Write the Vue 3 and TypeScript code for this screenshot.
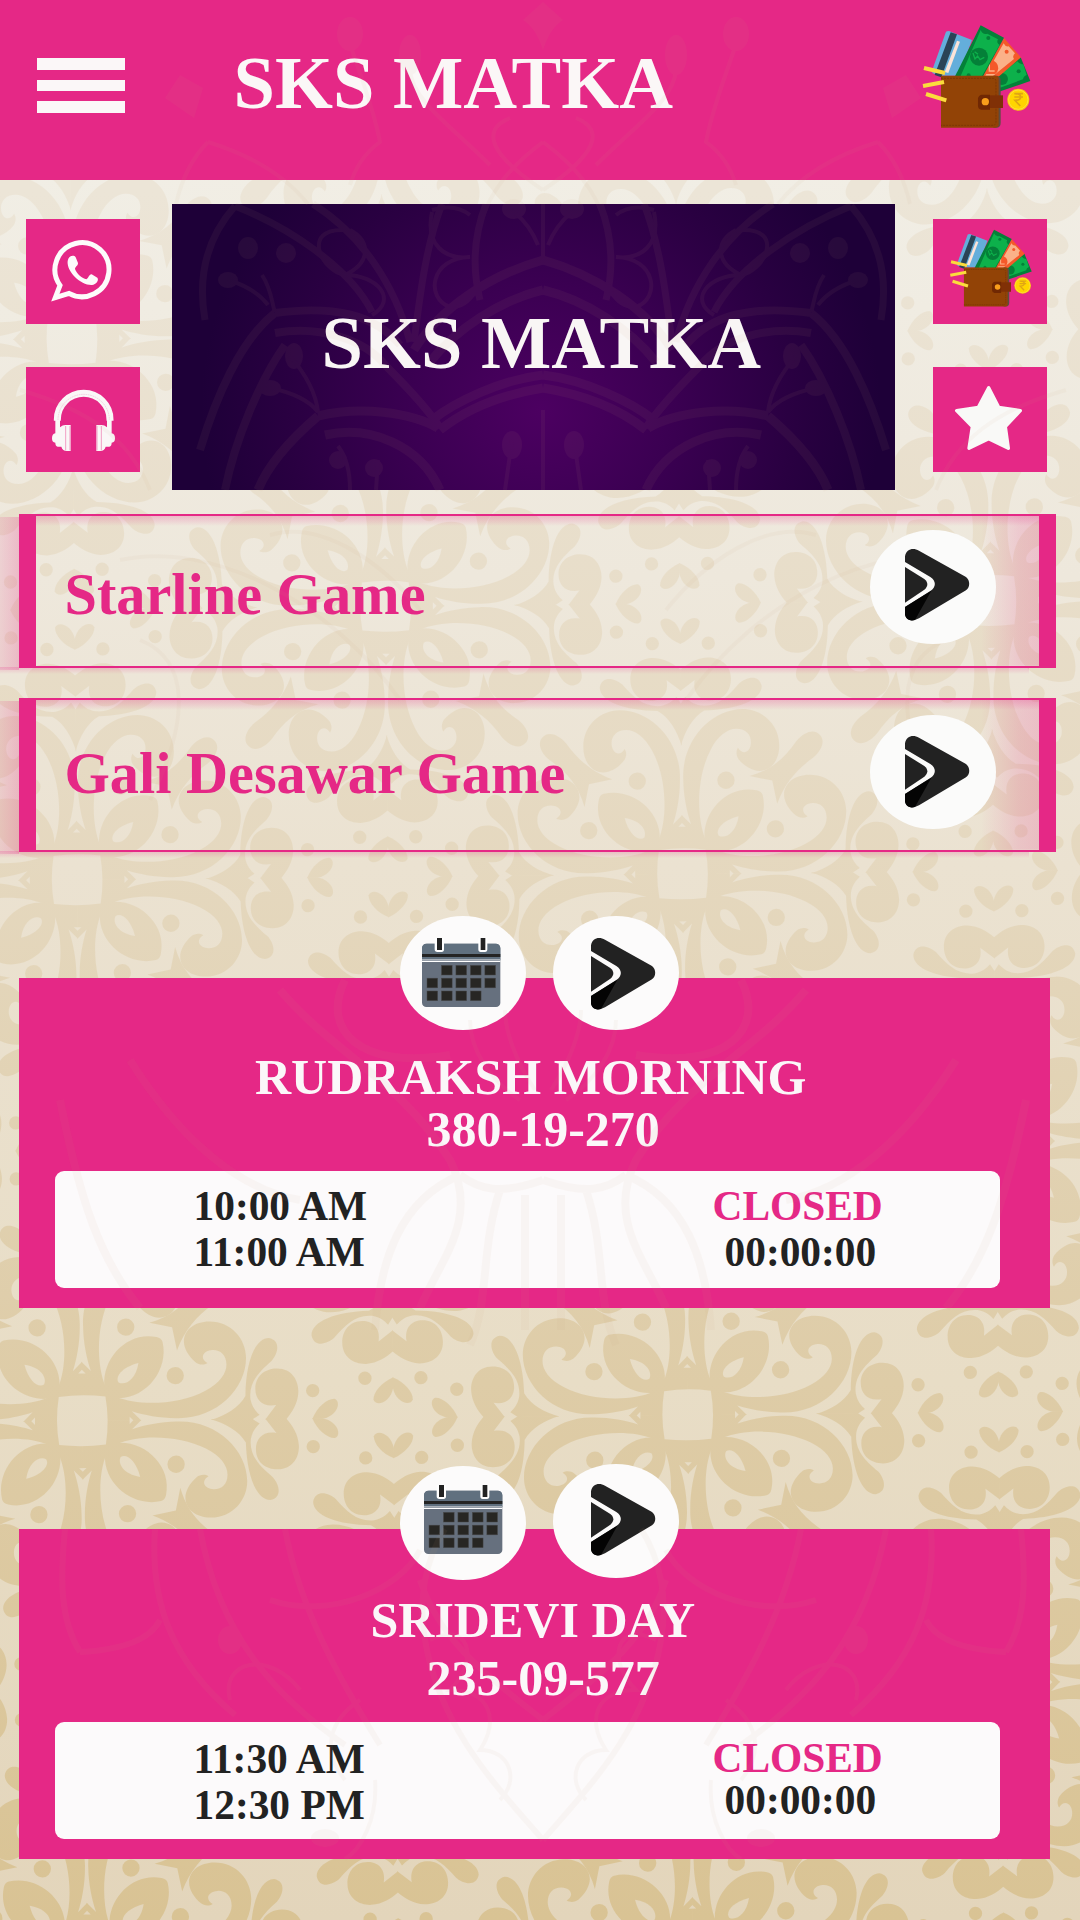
<script setup lang="ts">
interface Point { x: number; y: number }
interface GameRow { label: string; kind: string; iconShift: number }
interface Market {
  name: string
  result: string
  open: string
  close: string
  status: string
  timer: string
  kind: string
  calX: number
  calY: number
  playY: number
}

const games: GameRow[] = [
  { label: 'Starline Game', kind: 'starline', iconShift: -9 },
  { label: 'Gali Desawar Game', kind: 'gali', iconShift: -3 },
]

const markets: Market[] = [
  { name: 'RUDRAKSH MORNING', result: '380-19-270', open: '10:00 AM', close: '11:00 AM', status: 'CLOSED', timer: '00:00:00', kind: 'first', calX: 0, calY: 0, playY: 0 },
  { name: 'SRIDEVI DAY', result: '235-09-577', open: '11:30 AM', close: '12:30 PM', status: 'CLOSED', timer: '00:00:00', kind: 'second', calX: 6, calY: -9, playY: -6 },
]

// Damask lattice: two interleaved grids of the same eight-fold flower.
const flowers: Point[] = []
for (let r = -4; r <= 2; r++) {
  for (let c = -2; c <= 2; c++) {
    flowers.push({ x: c * 605.4, y: r * 541 })
    flowers.push({ x: c * 605.4 + 311, y: r * 541 + 270.5 })
  }
}
const arms = [0, 90, 180, 270]
const calCells: Point[] = []
;[[1, 2, 3, 4], [0, 1, 2, 3, 4], [0, 1, 2, 3]].forEach((cols, row) => {
  cols.forEach((c) => calCells.push({ x: 81 + c * 43.4, y: 148 + row * 38.5 }))
})
</script>

<template>
  <div class="page">
    <svg class="wallpaper" viewBox="0 0 1080 1920" aria-hidden="true">
      <defs>
        <linearGradient id="ink" x1="0" y1="0" x2="0" y2="1">
          <stop offset="0.1" stop-color="#ece5d7" />
          <stop offset="0.4" stop-color="#e6dac3" />
          <stop offset="0.72" stop-color="#decca7" />
          <stop offset="1" stop-color="#d9c394" />
        </linearGradient>
        <g id="half">
          <path d="M102-71C170-42 290-45 370-87C415-110 434-140 434-165C434-195 415-210 392-209C365-208 352-185 377-170C365-162 350-166 342-172C320-190 307-215 307-234C307-270 340-294 383-294C450-294 493-240 493-185C493-90 400 0 282-5C235-5 185-15 149-27L177 1L0 1L0 0Z" />
          <circle cx="280" cy="-133" r="26" />
          <path d="M385 1C430-12 470-35 490-70C492-170 520-243 562-243C600-235 588-195 570-175C530-140 500-110 505-60C510-35 520-25 532-13L510 1Z" />
          <path d="M549 1L582-42C540-35 520-60 520-90C520-130 550-151 585-151C630-151 650-115 649-80C647-45 630-20 612 1Z" />
          <path d="M690 1C705-35 735-60 757-59C778-52 768-8 720 1Z" />
          <circle cx="692" cy="-84" r="20" />
        </g>
        <g id="arm">
          <use href="#half" />
          <use href="#half" transform="scale(1 -1)" />
          <path d="M67-105C62-190 140-268 225-249Q240-246 243-234C262-150 190-62 105-67L0 0Z" />
          <path d="M204-292L272-278L286-208C310-270 345-310 395-345C425-370 432-400 415-415C400-432 370-425 345-395C310-345 270-310 204-292Z" />
          <path fill="#000" d="M170-172C120-160 98-130 110-114C130-104 162-122 170-172Z" />
          <path fill="#000" d="M142-11L153 0L142 11Z" />
        </g>
        <g id="flower">
          <use v-for="a in arms" :key="a" href="#arm" :transform="`rotate(${a})`" />
          <path fill="#000" d="M-70-72Q0-82 70-72Q82 0 70 72Q0 80-70 72Q-82 0-70-72Z" />
        </g>
        <mask id="damask" maskUnits="userSpaceOnUse" x="0" y="0" width="1080" height="1920">
          <g fill="#fff" transform="translate(687.7 1415) rotate(-.55)">
            <use
              v-for="(f, i) in flowers"
              :key="i"
              href="#flower"
              :transform="`translate(${f.x} ${f.y}) scale(.3333)`"
            />
          </g>
        </mask>
        <g id="wallet">
          <path fill="#64aedb" d="M138 66Q146 62 154 67L216 91L176 198H118L97 190Q96 180 100 172Z" />
          <path fill="#2a4356" d="M152 68L171 74L124 203L104 196Z" />
          <path fill="#fbe3d8" d="M171 93L180 96L145 190L134 187Z" />
          <path fill="#048038" d="M362 143L391 214L286 250L290 190Z" />
          <path fill="#0db14b" d="M352 155Q360 166 370 163L380 196Q370 200 369 209L300 234L296 196Z" />
          <circle cx="356" cy="185" r="6" fill="#048038" />
          <circle cx="306" cy="208" r="18" fill="#048038" />
          <path fill="#f4592a" d="M312 85L363 143L280 215H240Z" />
          <path fill="#fbb188" d="M311 101Q316 112 326 110L345 131Q336 140 342 148L280 198H256Z" />
          <circle cx="320" cy="126" r="6" fill="#f4592a" />
          <path fill="#f4592a" d="M258 193A23 23 0 1 1 286 193Z" />
          <path d="M268 164V184H284" fill="none" stroke="#fbb188" stroke-width="4" />
          <path fill="#048038" d="M242 47L312 84L248 202H164Z" />
          <path fill="#0db14b" d="M242 61Q248 76 262 72L294 89Q288 100 299 106L246 199H182Z" />
          <circle cx="265" cy="85" r="6" fill="#048038" />
          <circle cx="206" cy="197" r="6" fill="#048038" />
          <circle cx="237" cy="141" r="27" fill="#048038" />
          <path d="M219 130L225 148L233 139L240 150L253 143M224 126L234 134" fill="none" stroke="#0db14b" stroke-width="4" />
          <path fill="#5c4c43" d="M280 198H289Q302 198 302 212V339Q302 354 289 354H280Z" />
          <path fill="#924306" d="M123 198H286Q296 198 296 208V344Q296 354 286 354H123Z" />
          <path d="M123 206H278Q288 206 288 216V337Q288 347 278 347H123" fill="none" stroke="#713006" stroke-width="2" stroke-dasharray="6 3" />
          <path fill="#803006" d="M240 257H309V295H240Z" />
          <path fill="#702803" d="M244 255H270V300H244Q234 298 234 288V265Q236 257 244 255Z" />
          <circle cx="256" cy="276" r="11" fill="#f89e1b" />
          <circle cx="355" cy="270" r="33" fill="#fbc60e" />
          <circle cx="355" cy="270" r="29" fill="#ffd500" stroke="#fde45b" stroke-width="2" />
          <path d="M343 252H369M343 262H369M345 252Q362 252 362 262T345 272L361 289" fill="none" stroke="#e0a514" stroke-width="5" />
          <g stroke="#fbdc3c" stroke-width="12">
            <path d="M72 175L135 190" />
            <path d="M69 229L132 217" />
            <path d="M78 253L139 272" />
          </g>
        </g>
        <g id="play">
          <path fill="#222" d="M114 105V88C118 66 138 61 156 71L297 150C310 160 310 181 297 190L156 274C138 284 118 283 114 262V240L190 192C208 180 208 162 190 150Z" />
          <path fill="#222" d="M114 120L172 156C184 166 184 178 172 188L114 227Z" />
          <path fill="#040404" d="M114 240L193 191L144 279C130 283 116 279 114 262Z" />
        </g>
      </defs>
      <rect width="1080" height="1920" fill="url(#ink)" mask="url(#damask)" />
    </svg>

    <header class="topbar">
      <div class="menu"><i /><i /><i /></div>
      <h1 class="title">SKS MATKA</h1>
      <svg class="wallet" viewBox="60 40 340 320"><use href="#wallet" /></svg>
    </header>

    <section class="hero">
      <div class="side">
        <div class="tile">
          <svg viewBox="18 27 342 315">
            <path d="M120 226A81 81 0 1 1 147 250L106 263Z" fill="none" stroke="#fdfbfb" stroke-width="15" />
            <path fill="#fdfbfb" d="M145 146C149 137 162 134 167 142L174 159C175 166 165 171 165 177C170 192 187 205 199 208C205 206 207 192 215 193L232 203C238 211 228 223 216 225C184 227 139 186 143 153Z" />
          </svg>
        </div>
        <div class="tile">
          <svg viewBox="18 471 342 315">
            <path d="M112 632V629A79 79 0 0 1 270 629V632" fill="none" stroke="#faf7f7" stroke-width="21" />
            <path d="M114 630A77 77 0 0 1 268 630" fill="none" stroke="#f0bfd4" stroke-width="2" stroke-dasharray="5 2" />
            <g fill="#faf7f7">
              <path d="M106 630H120V652Q128 645 136 645H152V723H140Q128 723 124 710H113Q106 708 106 698Q96 698 96 685T106 670Z" />
              <path d="M275 630H261V652Q253 645 245 645H229V723H241Q253 723 257 710H268Q275 708 275 698Q285 698 285 685T275 670Z" />
            </g>
            <path d="M137 648V721M150 648V721M231 648V721M244 648V721" stroke="#ee8dbb" stroke-width="2.5" />
          </svg>
        </div>
      </div>
      <div class="banner"><span>SKS MATKA</span></div>
      <div class="side">
        <div class="tile tile-wallet">
          <svg class="wallet-sm" viewBox="60 40 340 320" preserveAspectRatio="none"><use href="#wallet" /></svg>
        </div>
        <div class="tile">
          <svg viewBox="39 471 342 315">
            <path d="M206 533L236 592L301 602L256 650L265 715L206 686L147 715L157 650L110 602L175 592Z" fill="#f9f9f7" stroke="#f9f9f7" stroke-width="10" stroke-linejoin="round" />
          </svg>
        </div>
      </div>
    </section>

    <section v-for="g in games" :key="g.kind" class="game" :class="g.kind">
      <span class="game-label">{{ g.label }}</span>
      <svg class="disc" viewBox="0 0 378 342">
        <ellipse cx="189" cy="171" rx="189" ry="171" fill="#fbfbfa" />
        <use href="#play" :transform="`translate(-9 ${g.iconShift})`" />
      </svg>
    </section>

    <section v-for="m in markets" :key="m.kind" class="market" :class="m.kind">
      <div class="discs">
        <svg class="disc" viewBox="0 0 378 342">
          <ellipse cx="189" cy="171" rx="189" ry="171" fill="#fcfbfb" />
          <g :transform="`translate(${m.calX} ${m.calY})`">
            <rect x="66" y="83" width="235" height="190" rx="13" fill="#66707e" />
            <path d="M66 98Q66 83 81 83H286Q301 83 301 98V133H66Z" fill="#60707f" />
            <rect x="66" y="114" width="235" height="9" fill="#242424" />
            <rect x="66" y="129" width="235" height="3" fill="#a9b0b8" />
            <rect x="66" y="134" width="235" height="4" fill="#fff" />
            <path d="M104 66V100Q104 108 112 108H125Q132 108 132 100V66ZM235 66V100Q235 108 242 108H255Q262 108 262 100V66Z" fill="#fff" />
            <path d="M111 66H126V102H111ZM242 66H256V102H242Z" fill="#222" />
            <rect v-for="(c, i) in calCells" :key="i" :x="c.x" :y="c.y" width="32" height="29" fill="#272623" stroke="#48484a" stroke-width="1.5" />
          </g>
        </svg>
        <svg class="disc disc-play" viewBox="0 0 378 342">
          <ellipse cx="189" cy="171" rx="189" ry="171" fill="#fcfbfb" />
          <use href="#play" :transform="`translate(0 ${m.playY})`" />
        </svg>
      </div>
      <h2 class="market-name">{{ m.name }}</h2>
      <p class="market-result">{{ m.result }}</p>
      <div class="times">
        <div class="col hours"><span>{{ m.open }}</span><span>{{ m.close }}</span></div>
        <div class="col state"><span class="closed">{{ m.status }}</span><span class="timer">{{ m.timer }}</span></div>
      </div>
    </section>

    <svg class="mandala" viewBox="0 0 1080 1920" aria-hidden="true">
      <defs>
        <g id="mandala-half">
          <g fill="#c9a07c" stroke="none">
            <path d="M543 2L523 20Q536 28 543 50Z" />
            <ellipse cx="350" cy="34" rx="13" ry="17" />
            <ellipse cx="410" cy="55" rx="11" ry="20" />
            <path d="M180 75L165 98L194 118L203 88Z" />
            <ellipse cx="248" cy="248" rx="10" ry="11" />
            <ellipse cx="286" cy="253" rx="10" ry="10" />
            <ellipse cx="228" cy="280" rx="10" ry="8" />
            <ellipse cx="270" cy="388" rx="11" ry="8" />
            <ellipse cx="294" cy="356" rx="9" ry="13" />
            <ellipse cx="514" cy="209" rx="12" ry="10" />
            <ellipse cx="512" cy="445" rx="10" ry="14" />
            <ellipse cx="338" cy="460" rx="9" ry="9" />
            <ellipse cx="374" cy="468" rx="9" ry="9" />
            <ellipse cx="230" cy="1640" rx="12" ry="14" />
            <ellipse cx="325" cy="1838" rx="14" ry="9" />
          </g>
          <path d="M352 50C362 80 374 110 380 142Q358 158 350 185M410 70C412 100 450 125 490 165" />
          <path d="M208 142C250 155 285 175 308 204M208 142Q185 165 176 204M543 142C512 165 490 190 480 225M510 118C480 130 490 155 543 190" />
          <path d="M235 206C290 228 350 268 372 312M235 206C205 240 198 280 205 320M313 204C362 235 395 285 410 342M442 204C426 245 420 295 414 342M486 204C474 235 472 268 480 300" stroke-width="7" />
          <path d="M543 260C490 275 440 308 414 350M543 290C500 300 455 330 430 362" stroke-width="9" />
          <path d="M275 313C335 305 375 315 400 345M275 313C240 340 215 400 200 450M275 333C320 325 365 340 385 365C415 395 430 412 440 428M285 345C260 380 235 440 225 490" stroke-width="8" />
          <path d="M318 416C360 406 410 412 438 428M318 416C290 440 268 465 258 490M325 435C370 425 420 445 440 490M543 388C500 395 465 410 440 430M543 375C500 380 455 402 432 420" stroke-width="9" />
          <path d="M432 210Q455 203 470 215M432 212C425 245 445 260 470 257C430 258 425 298 450 307Q465 308 475 292M350 230C370 240 372 262 345 275M345 230C300 228 322 272 345 275C378 275 398 300 372 315" />
          <path d="M350 490C350 470 345 455 338 446M376 490L378 460M505 490L512 440M543 410V490M543 204V262M514 212Q530 225 538 245M262 275C272 290 272 305 275 312M228 280Q255 288 268 305M290 356Q315 385 318 412M270 388Q305 395 318 412" />
          <path d="M20 390C90 410 130 440 150 490M120 560C210 540 330 600 400 700M270 535C320 520 380 560 420 610M140 640C190 660 190 720 150 800" />
          <path d="M345 980C320 1030 360 1070 450 1055M280 990C330 1050 400 1080 450 1160C480 1220 440 1260 420 1308M60 1100C80 1200 100 1260 140 1308M130 1060C180 1140 240 1190 300 1200M543 1180C500 1195 480 1190 460 1175M460 1175C400 1200 380 1260 375 1330M500 1190C480 1250 490 1300 470 1345M525 1195V1330" stroke-width="8" />
          <path d="M520 1100C490 1080 470 1050 470 1020M535 1090C515 1060 505 1030 505 1010" />
          <path d="M543 1840C500 1790 440 1730 425 1640C418 1600 425 1560 445 1529M543 1720C480 1670 440 1640 420 1580M345 1745C280 1700 220 1640 200 1529M380 1745C340 1680 300 1610 285 1529M235 1715C170 1660 150 1600 155 1529M270 1600C330 1620 400 1590 420 1550M80 1652C120 1650 150 1640 160 1620M80 1652C60 1620 60 1580 65 1529" stroke-width="6" />
          <path d="M430 1640C470 1620 480 1660 450 1690C490 1690 500 1720 480 1750C510 1750 520 1780 500 1800M230 1700C220 1660 270 1650 300 1690M345 1780C320 1750 330 1720 360 1700M375 1780C378 1820 360 1850 345 1859" />
        </g>
      </defs>
      <g fill="none" stroke="#c9a07c" stroke-width="4" opacity=".06">
        <use href="#mandala-half" />
        <use href="#mandala-half" transform="translate(1086 0) scale(-1 1)" />
      </g>
    </svg>
  </div>
</template>

<style>
body {
  margin: 0;
}
</style>

<style scoped>
.page {
  position: relative;
  width: 1080px;
  height: 1920px;
  overflow: hidden;
  display: flex;
  flex-direction: column;
  font-family: "Liberation Serif", "Times New Roman", serif;
  font-weight: 700;
  background: linear-gradient(#f1eee5 9%, #eee8dc 30%, #ebe2d1 45%, #e8ddc6 72%, #e3d5bb 100%);
}
.wallpaper,
.mandala {
  position: absolute;
  top: 0;
  left: 0;
  width: 1080px;
  height: 1920px;
  pointer-events: none;
}
.page > header,
.page > section {
  position: relative;
}
.topbar {
  flex: none;
  height: 180px;
  display: flex;
  align-items: flex-start;
  background: #e52886;
}
.menu {
  display: flex;
  flex-direction: column;
  gap: 10px;
  width: 88px;
  margin: 58px 0 0 37px;
}
.menu i {
  display: block;
  height: 11.5px;
  background: #fbf7f8;
}
.title {
  margin: 42.5px 0 0 108.5px;
  width: 686.5px;
  font-size: 74.5px;
  line-height: 80px;
  color: #fbf7f7;
  font-weight: 700;
}
.wallet {
  width: 113.3px;
  height: 106.7px;
  margin-top: 23.3px;
}
.hero {
  flex: none;
  display: flex;
  height: 286px;
  margin-top: 24px;
  padding-left: 26px;
}
.side {
  display: flex;
  flex-direction: column;
  gap: 43px;
  padding-top: 15px;
}
.tile {
  width: 114px;
  height: 105px;
  background: #e52886;
}
.tile svg {
  display: block;
  width: 100%;
  height: 100%;
}
.tile-wallet {
  box-sizing: border-box;
  padding: 8.5px 0 0 15px;
}
.tile svg.wallet-sm {
  width: 86px;
  height: 80px;
}
.banner {
  width: 723px;
  margin: 0 38px 0 32px;
  background: radial-gradient(ellipse 340px 330px at 51% 72%, #4c0061 0%, #3b0052 38%, #290041 75%, #1e0038 100%);
}
.banner span {
  display: block;
  margin: 99px 0 0 149.5px;
  font-size: 74.5px;
  line-height: 80px;
  color: #f9f6f5;
}
.game {
  flex: none;
  box-sizing: border-box;
  width: 1037px;
  height: 153.5px;
  margin-left: 19px;
  border: solid #e52886;
  border-width: 2.5px 17.5px;
  display: flex;
  justify-content: space-between;
  background:
    linear-gradient(to left, rgba(229, 40, 134, .2), rgba(229, 40, 134, .16) 35%, transparent) right / 58px 100% no-repeat padding-box,
    linear-gradient(rgba(229, 40, 134, .24), transparent) top / 100% 10px no-repeat padding-box;
}
.game::before,
.game::after {
  content: "";
  position: absolute;
}
.game::before {
  left: -36.5px;
  top: 1px;
  width: 19px;
  height: 153px;
  background: linear-gradient(to right, rgba(229, 40, 134, .12), rgba(229, 40, 134, .24));
}
.game::after {
  left: -36px;
  right: 10px;
  top: 151px;
  height: 7px;
  background: linear-gradient(rgba(229, 40, 134, .22), transparent);
}
.game.starline {
  margin-top: 24px;
}
.game.gali {
  margin-top: 30.5px;
}
.game-label {
  margin: 47px 0 0 28.5px;
  font-size: 58.3px;
  line-height: 64px;
  color: #e52886;
}
.gali .game-label {
  margin-top: 42px;
}
.disc {
  display: block;
  flex: none;
  width: 126px;
  height: 114px;
}
.game .disc {
  position: relative;
  z-index: 1;
  margin: 13.5px 43.5px 0 0;
}
.gali .disc {
  margin-top: 14.5px;
}
.market {
  flex: none;
  box-sizing: border-box;
  width: 1031px;
  height: 330px;
  margin-left: 19px;
  background: #e52886;
}
.market.first {
  margin-top: 126.5px;
}
.market.second {
  margin-top: 220.5px;
}
.discs {
  display: flex;
  gap: 27px;
  height: 114px;
  margin: -62.5px 0 0 381px;
}
.second .disc-play {
  margin-top: -2px;
}
.market-name,
.market-result {
  margin: 0;
  font-size: 50px;
  line-height: 52px;
  color: #fbf7f9;
}
.market-name {
  padding: 21px 0 0 236px;
}
.second .market-name {
  padding: 13.5px 0 0 351.5px;
}
.market-result {
  padding-left: 407.5px;
}
.second .market-result {
  margin-top: 6px;
}
.times {
  display: flex;
  width: 945px;
  height: 117px;
  margin: 16px 0 0 36px;
  border-radius: 9px;
  background: #fcfafb;
  font-size: 41.4px;
  line-height: 46px;
  color: #222;
}
.second .times {
  margin-top: 18px;
}
.col {
  display: flex;
  flex-direction: column;
  padding-top: 12.5px;
}
.second .col {
  padding-top: 14px;
}
.second .state {
  padding-top: 13px;
}
.hours {
  width: 519px;
  padding-left: 138.5px;
}
.closed {
  color: #e52886;
}
.timer {
  padding-left: 12px;
}
.second .timer {
  margin-top: -4px;
}
</style>
